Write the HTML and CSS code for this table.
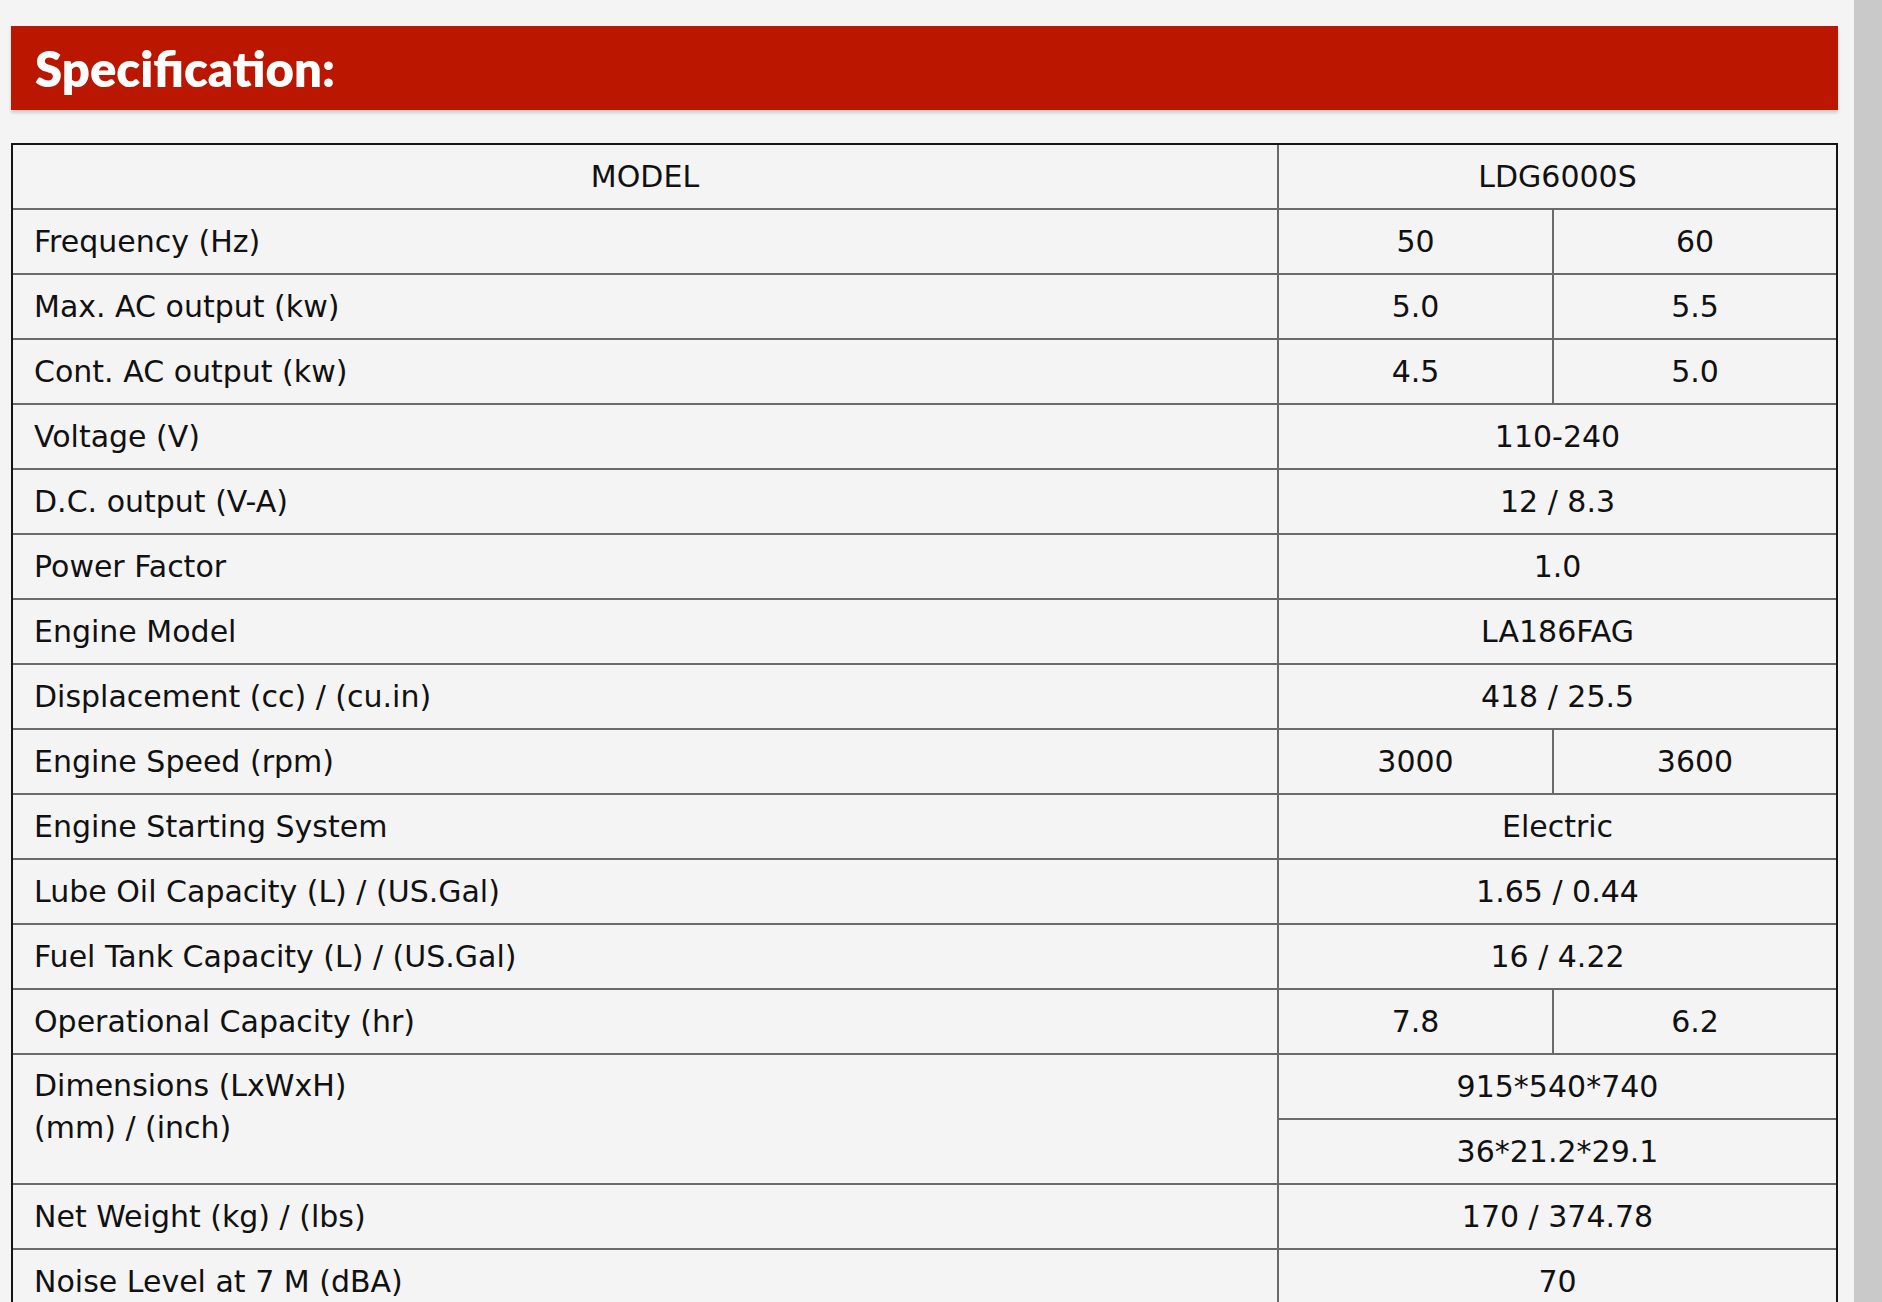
FILE: index.html
```html
<!DOCTYPE html>
<html>
<head>
<meta charset="utf-8">
<link rel="stylesheet" href="styles.css">
</head>
<body>
<div class="screen">
  <div class="page">
    <div class="title-bar"><h2 class="title">Specification:</h2></div>
    <table class="spec">
      <colgroup><col class="c1"><col class="c2"><col class="c3"></colgroup>
      <tr class="head"><td class="lab center">MODEL</td><td class="val" colspan="2">LDG6000S</td></tr>
      <tr><td class="lab">Frequency (Hz)</td><td class="val">50</td><td class="val">60</td></tr>
      <tr><td class="lab">Max. AC output (kw)</td><td class="val">5.0</td><td class="val">5.5</td></tr>
      <tr><td class="lab">Cont. AC output (kw)</td><td class="val">4.5</td><td class="val">5.0</td></tr>
      <tr><td class="lab">Voltage (V)</td><td class="val" colspan="2">110-240</td></tr>
      <tr><td class="lab">D.C. output (V-A)</td><td class="val" colspan="2">12 / 8.3</td></tr>
      <tr><td class="lab">Power Factor</td><td class="val" colspan="2">1.0</td></tr>
      <tr><td class="lab">Engine Model</td><td class="val" colspan="2">LA186FAG</td></tr>
      <tr><td class="lab">Displacement (cc) / (cu.in)</td><td class="val" colspan="2">418 / 25.5</td></tr>
      <tr><td class="lab">Engine Speed (rpm)</td><td class="val">3000</td><td class="val">3600</td></tr>
      <tr><td class="lab">Engine Starting System</td><td class="val" colspan="2">Electric</td></tr>
      <tr><td class="lab">Lube Oil Capacity (L) / (US.Gal)</td><td class="val" colspan="2">1.65 / 0.44</td></tr>
      <tr><td class="lab">Fuel Tank Capacity (L) / (US.Gal)</td><td class="val" colspan="2">16 / 4.22</td></tr>
      <tr><td class="lab">Operational Capacity (hr)</td><td class="val">7.8</td><td class="val">6.2</td></tr>
      <tr><td class="lab top" rowspan="2">Dimensions (LxWxH)<br>(mm) / (inch)</td><td class="val" colspan="2">915*540*740</td></tr>
      <tr><td class="val" colspan="2">36*21.2*29.1</td></tr>
      <tr><td class="lab">Net Weight (kg) / (lbs)</td><td class="val" colspan="2">170 / 374.78</td></tr>
      <tr><td class="lab">Noise Level at 7 M (dBA)</td><td class="val" colspan="2">70</td></tr>
    </table>
  </div>
  <div class="side-strip"></div>
</div>
</body>
</html>
```
FILE: styles.css
```css
html, body {
  margin: 0;
  padding: 0;
  background: #f4f4f4;
  height: 100%;
  overflow: hidden;
}
.screen {
  display: flex;
  height: 1302px;
  font-family: "DejaVu Sans", sans-serif;
  color: #111;
}
.page {
  width: 1854px;
  padding: 26px 0 0 11px;
  box-sizing: border-box;
}
.side-strip {
  flex: 1;
  background: #c9c9c9;
}
.title-bar {
  width: 1827px;
  height: 84px;
  background: #bb1700;
  box-shadow: 0 3px 3px rgba(0, 0, 0, 0.15);
  display: flex;
  align-items: center;
  padding-left: 24px;
  box-sizing: border-box;
}
.title {
  margin: 0;
  color: #fff;
  font-family: "Lato", "DejaVu Sans", sans-serif;
  font-weight: 800;
  font-size: 49px;
  letter-spacing: 0;
}
.spec {
  margin-top: 33px;
  width: 1827px;
  border: 2px solid #151515;
  border-collapse: separate;
  border-spacing: 0;
  table-layout: fixed;
  font-size: 30px;
}
.c1 { width: 1264px; }
.c2 { width: 275px; }
.c3 { width: 284px; }
.spec td {
  height: 63px;
  padding: 0;
  border-top: 2px solid #6a6a6a;
  border-left: 2px solid #6a6a6a;
  vertical-align: middle;
  white-space: nowrap;
}
.spec tr.head td {
  border-top: none;
}
.spec td.lab {
  border-left: none;
  padding-left: 21px;
  text-align: left;
}
.spec td.lab.center {
  text-align: center;
  padding-left: 0;
}
.spec td.lab.top {
  vertical-align: top;
  padding-top: 10px;
  line-height: 42px;
}
.spec td.val {
  text-align: center;
}
```
